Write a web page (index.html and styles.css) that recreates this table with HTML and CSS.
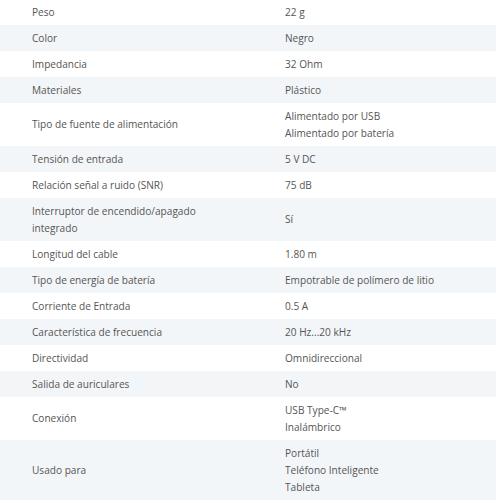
FILE: index.html
```html
<!DOCTYPE html>
<html lang="es">
<head>
<meta charset="utf-8">
<link rel="stylesheet" href="styles.css">
</head>
<body>
<table class="specs">
  <tbody>
    <tr><td class="k">Peso</td><td class="v">22 g</td></tr>
    <tr class="alt"><td class="k">Color</td><td class="v">Negro</td></tr>
    <tr><td class="k">Impedancia</td><td class="v">32 Ohm</td></tr>
    <tr class="alt"><td class="k">Materiales</td><td class="v">Plástico</td></tr>
    <tr><td class="k">Tipo de fuente de alimentación</td><td class="v">Alimentado por USB<br>Alimentado por batería</td></tr>
    <tr class="alt"><td class="k">Tensión de entrada</td><td class="v">5 V DC</td></tr>
    <tr><td class="k">Relación señal a ruido (SNR)</td><td class="v">75 dB</td></tr>
    <tr class="alt"><td class="k">Interruptor de encendido/apagado<br>integrado</td><td class="v">Sí</td></tr>
    <tr><td class="k">Longitud del cable</td><td class="v">1.80 m</td></tr>
    <tr class="alt"><td class="k">Tipo de energía de batería</td><td class="v">Empotrable de polímero de litio</td></tr>
    <tr><td class="k">Corriente de Entrada</td><td class="v">0.5 A</td></tr>
    <tr class="alt"><td class="k">Característica de frecuencia</td><td class="v">20 Hz...20 kHz</td></tr>
    <tr><td class="k">Directividad</td><td class="v">Omnidireccional</td></tr>
    <tr class="alt"><td class="k">Salida de auriculares</td><td class="v">No</td></tr>
    <tr><td class="k">Conexión</td><td class="v">USB Type-C™<br>Inalámbrico</td></tr>
    <tr class="alt"><td class="k">Usado para</td><td class="v">Portátil<br>Teléfono Inteligente<br>Tableta</td></tr>
  </tbody>
</table>
</body>
</html>
```
FILE: styles.css
```css
html, body {
  margin: 0;
  padding: 0;
  background: #ffffff;
}
body {
  font-family: "Open Sans", "Liberation Sans", sans-serif;
  font-size: 10.1px;
  color: #555555;
  overflow: hidden;
}
.specs {
  width: 496px;
  border-collapse: collapse;
  margin-top: -1px;
  table-layout: fixed;
}
.specs td {
  padding: 4.5px 0 4.5px 32px;
  line-height: 17px;
  vertical-align: middle;
  text-align: left;
}
.specs td.k {
  width: 221px;
}
.specs tr.alt td {
  background: #f3f6f9;
}
```
